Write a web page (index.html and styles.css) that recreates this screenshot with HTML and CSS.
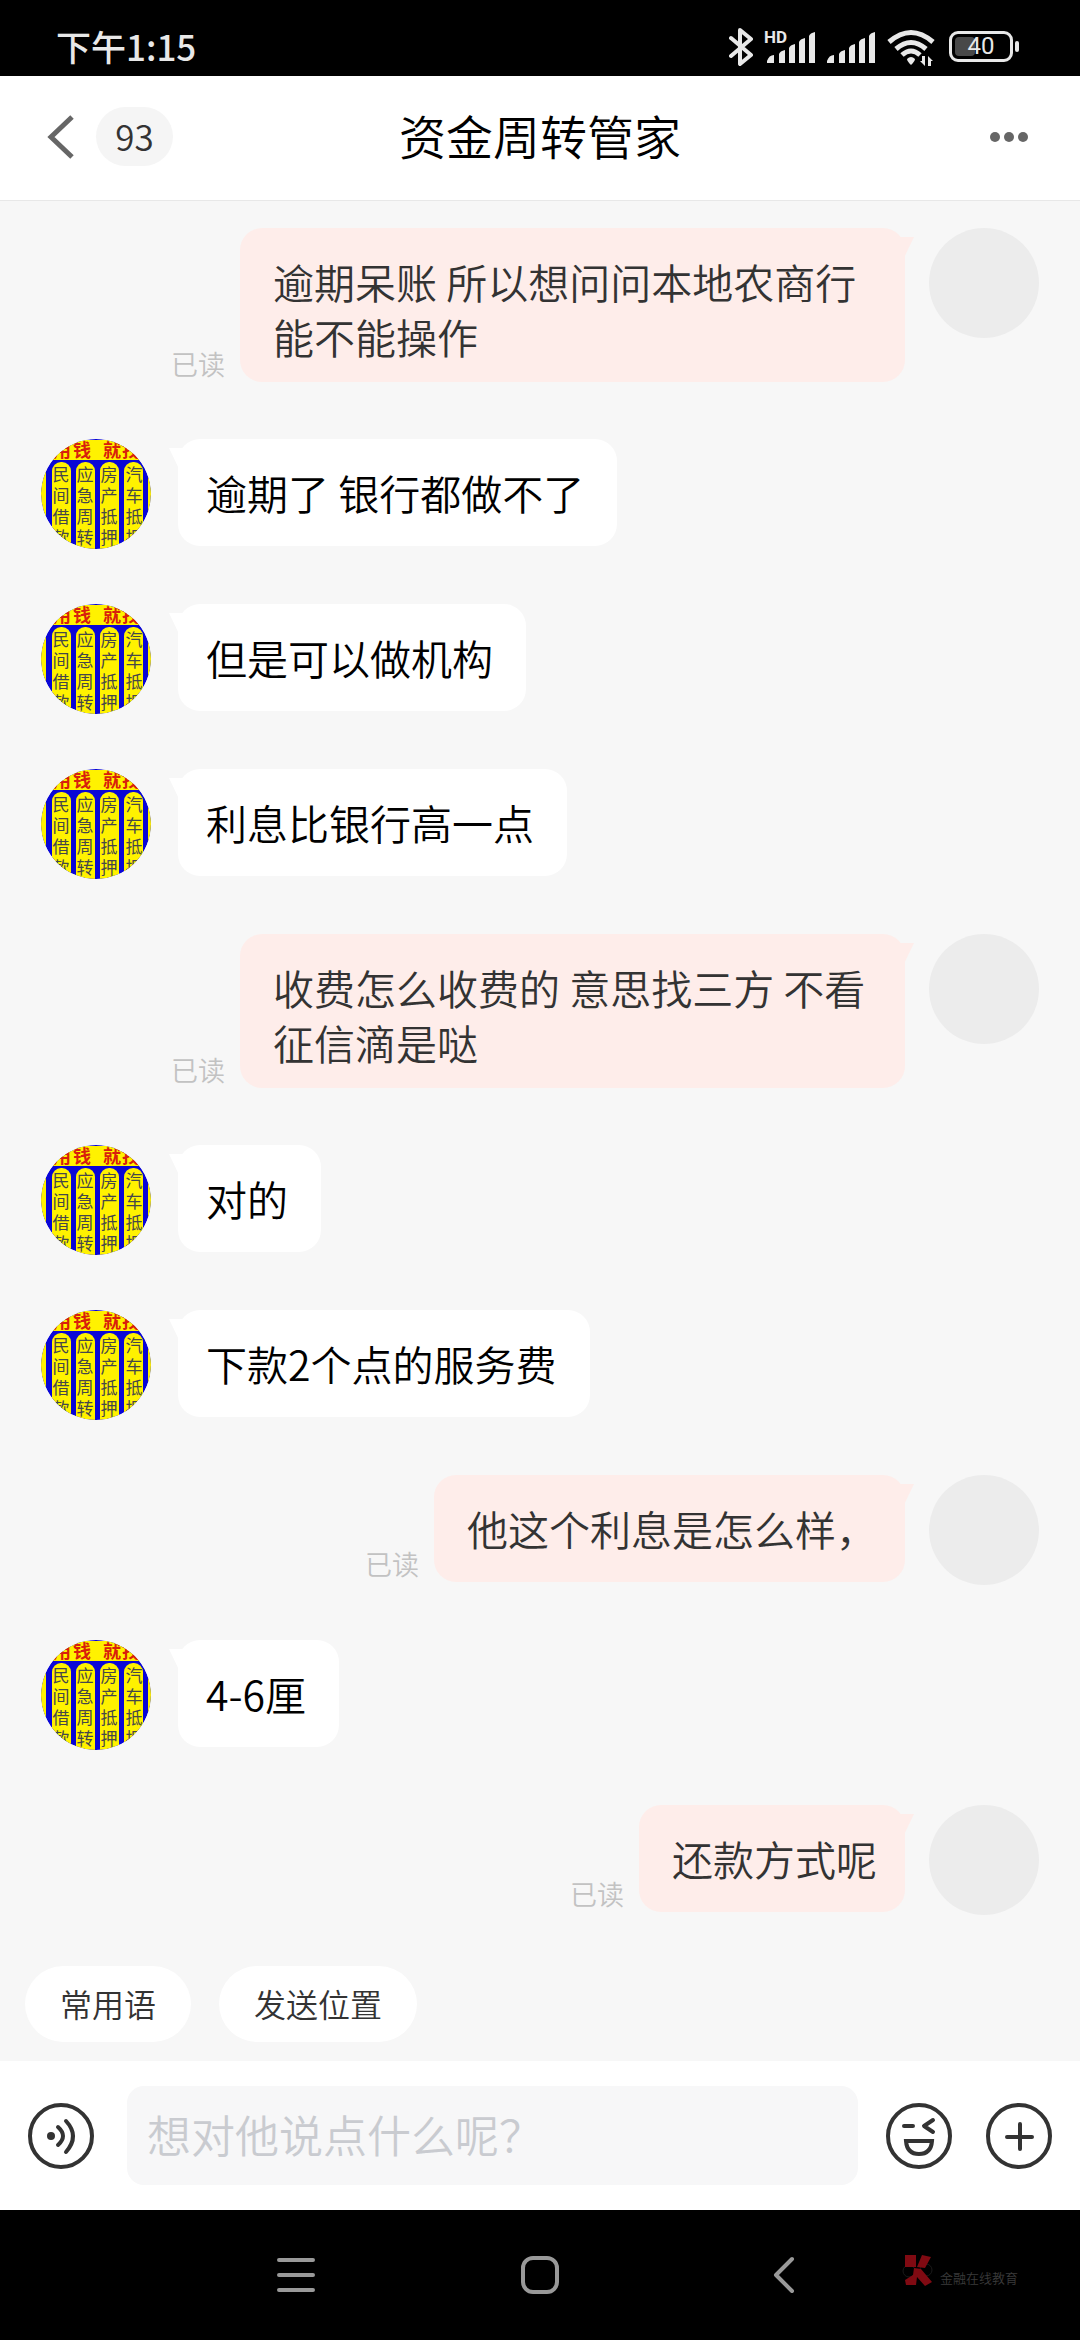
FILE: index.html
```html
<!DOCTYPE html>
<html lang="zh-CN">
<head>
<meta charset="utf-8">
<meta name="viewport" content="width=device-width">
<title>资金周转管家</title>
<link rel="stylesheet" href="styles.css">
</head>
<body>
<svg class="defs" width="0" height="0" aria-hidden="true">
  <symbol id="shop" viewBox="0 0 110 110">
    <clipPath id="round"><circle cx="55" cy="55" r="55"/></clipPath>
    <g clip-path="url(#round)">
      <rect width="110" height="110" fill="#0a06d6"/>
      <rect width="110" height="20" y="1" fill="#fff200"/>
      <rect x="-14" y="23" width="19" height="110" rx="9" fill="#fff200"/>
      <rect x="11" y="23" width="19" height="110" rx="9" fill="#fff200"/>
      <rect x="35" y="23" width="19" height="110" rx="9" fill="#fff200"/>
      <rect x="59" y="23" width="19" height="110" rx="9" fill="#fff200"/>
      <rect x="83" y="23" width="19" height="110" rx="9" fill="#fff200"/>
      <rect x="107" y="23" width="19" height="110" rx="9" fill="#fff200"/>
      <g class="shop-head"><text x="21" y="18">用</text><text x="41" y="18">钱</text><text x="71" y="18">就</text><text x="90" y="18">找</text></g>
      <g class="shop-cell">
        <text x="20" y="42">民</text><text x="20" y="63">间</text><text x="20" y="84">借</text><text x="20" y="105">款</text>
        <text x="44" y="42">应</text><text x="44" y="63">急</text><text x="44" y="84">周</text><text x="44" y="105">转</text>
        <text x="68" y="42">房</text><text x="68" y="63">产</text><text x="68" y="84">抵</text><text x="68" y="105">押</text>
        <text x="93" y="42">汽</text><text x="93" y="63">车</text><text x="93" y="84">抵</text><text x="93" y="105">押</text>
      </g>
    </g>
  </symbol>
</svg>

<div class="status">
  <span class="clock">下午1:15</span>
  <svg width="220" height="44" viewBox="0 0 220 44" role="img" aria-label="蓝牙 HD 信号 无线网络">
    <path d="M2 14 22 31 11 40V6L22 15 2 32" fill="none" stroke="#e8e8e8" stroke-width="4" stroke-linejoin="round" stroke-linecap="round"/>
    <text class="hd" x="35" y="19">HD</text>
    <g fill="#e8e8e8">
      <path id="bars" d="M38 39v-2q2-6 7-6v8zM50 39v-9q1-3 6-4v13zM60 39v-15q1-3 6-4v19zM70 39v-21q1-3 6-4v25zM80 39v-27q1-3 6-4v31z"/>
      <use href="#bars" x="60"/>
      <path d="M178 35q4-4 8 0 0 2-4 6-4-4-4-6z"/>
      <path d="M196 32v10l-5-5h2v-5zM199 42v-10l5 5h-2v5z"/>
    </g>
    <g fill="none" stroke="#e8e8e8" stroke-width="5">
      <path d="M160 18q22-19 44 0"/><path d="M167 25q15-13 30 0"/><path d="M173 31q9-8 18 0"/>
    </g>
  </svg>
  <span class="battery"><span class="charge"></span><span class="percent">40</span></span>
</div>

<header class="header">
  <div class="side">
    <button class="plain" aria-label="返回"><svg width="28" height="46" viewBox="0 0 28 46"><path d="M25 3 4 23l21 20" fill="none" stroke="#666" stroke-width="5"/></svg></button>
    <span class="count">93</span>
  </div>
  <h1 class="title">资金周转管家</h1>
  <div class="side end">
    <button class="plain" aria-label="更多"><svg width="45" height="12" viewBox="0 0 45 12" fill="#666"><circle cx="7" cy="6" r="5"/><circle cx="21" cy="6" r="5"/><circle cx="35" cy="6" r="5"/></svg></button>
  </div>
</header>

<main class="chat">
  <div class="row mine"><div class="avatar"></div><div class="line"><p class="bubble">逾期呆账 所以想问问本地农商行能不能操作</p><span class="read">已读</span></div></div>
  <div class="row"><svg class="avatar"><use href="#shop"/></svg><div class="line"><p class="bubble">逾期了 银行都做不了</p></div></div>
  <div class="row"><svg class="avatar"><use href="#shop"/></svg><div class="line"><p class="bubble">但是可以做机构</p></div></div>
  <div class="row"><svg class="avatar"><use href="#shop"/></svg><div class="line"><p class="bubble">利息比银行高一点</p></div></div>
  <div class="row mine"><div class="avatar"></div><div class="line"><p class="bubble">收费怎么收费的 意思找三方 不看征信滴是哒</p><span class="read">已读</span></div></div>
  <div class="row"><svg class="avatar"><use href="#shop"/></svg><div class="line"><p class="bubble">对的</p></div></div>
  <div class="row"><svg class="avatar"><use href="#shop"/></svg><div class="line"><p class="bubble">下款2个点的服务费</p></div></div>
  <div class="row mine"><div class="avatar"></div><div class="line"><p class="bubble">他这个利息是怎么样，</p><span class="read">已读</span></div></div>
  <div class="row"><svg class="avatar"><use href="#shop"/></svg><div class="line"><p class="bubble">4-6厘</p></div></div>
  <div class="row mine"><div class="avatar"></div><div class="line"><p class="bubble">还款方式呢</p><span class="read">已读</span></div></div>
</main>

<div class="quick">
  <button class="chip">常用语</button>
  <button class="chip">发送位置</button>
</div>

<form class="composer">
  <button class="plain voice" type="button" aria-label="语音"><svg class="tool" viewBox="0 0 66 66"><circle cx="33" cy="33" r="31"/><circle class="dot" cx="23" cy="33" r="4"/><path d="M30 24q10 9 0 18M38 18q14 15 0 31"/></svg></button>
  <input class="entry" type="text" aria-label="消息" placeholder="想对他说点什么呢？">
  <div class="tools">
    <button class="plain" type="button" aria-label="表情"><svg class="tool" viewBox="0 0 66 66"><circle cx="33" cy="33" r="31"/><path d="M18 23h9M47 17l-9 6 9 6"/><path d="M20 38h26q-1 13-13 13T20 38z" stroke-linejoin="miter"/></svg></button>
    <button class="plain" type="button" aria-label="更多功能"><svg class="tool" viewBox="0 0 66 66"><circle cx="33" cy="33" r="31"/><path d="M21 34h25M34 21v25"/></svg></button>
  </div>
</form>

<nav class="nav">
  <button class="plain" aria-label="最近任务"><svg class="key" viewBox="0 0 40 40"><path d="M3 5h34M3 20h34M3 35h34"/></svg></button>
  <button class="plain" aria-label="主屏幕"><svg class="key" viewBox="0 0 40 40"><rect x="3" y="3" width="34" height="34" rx="10"/></svg></button>
  <button class="plain" aria-label="返回上一页"><svg class="key" viewBox="0 0 40 40"><path d="M28 4 12 20l16 16"/></svg></button>
  <div class="mark">
    <svg width="32" height="36" viewBox="0 0 32 36"><g fill="none" stroke="#1a1a1a"><circle cx="7" cy="20" r="6"/><circle cx="24" cy="19" r="6"/></g><path fill="#800a12" d="M3 4h11v12H3zM20 4l9 2-6 11-8-1zM12 17l7 1 11 13-7 4-8-9-1 8H4l-1-5 8-5z"/></svg>
    <span>金融在线教育</span>
  </div>
</nav>
</body>
</html>
```

FILE: styles.css
```css
* { box-sizing: border-box; }

body {
  margin: 0;
  min-height: 100vh;
  display: flex;
  flex-direction: column;
  background: #f7f7f7;
  color: #000;
  font-family: "Noto Sans CJK SC DemiLight", "Noto Sans CJK SC", sans-serif;
  font-weight: 350;
}

.defs { position: absolute; }

.plain {
  display: flex;
  padding: 0;
  border: 0;
  background: none;
}

/* System status bar */
.status {
  height: 76px;
  padding: 16px 67px 0 56px;
  display: flex;
  align-items: center;
  background: #000;
  color: #e8e8e8;
}

.clock {
  flex: 1;
  font-family: "Noto Sans CJK SC", sans-serif;
  font-size: 35px;
  line-height: 44px;
  font-weight: 500;
}

.hd { font: 700 17px Roboto, sans-serif; fill: #e8e8e8; }

.battery {
  position: relative;
  width: 64px;
  height: 31px;
  border: 3px solid #e8e8e8;
  border-radius: 9px;
  display: flex;
  justify-content: center;
  align-items: center;
}

.charge {
  position: absolute;
  left: 3px;
  top: 3px;
  width: 20px;
  height: 19px;
  border-radius: 4px;
  background: #484848;
}

.battery::after {
  content: "";
  position: absolute;
  right: -9px;
  top: 7px;
  width: 4px;
  height: 11px;
  border-radius: 2px;
  background: #e8e8e8;
}

.percent { position: relative; font: 400 24px/24px Roboto, sans-serif; }

/* Title bar */
.header {
  height: 125px;
  padding: 0 47px 3px;
  display: flex;
  align-items: center;
  background: #fff;
  border-bottom: 1px solid #e8e8e8;
}

.side { flex: 1; display: flex; align-items: center; gap: 21px; }
.end { justify-content: flex-end; }

.count {
  width: 77px;
  height: 59px;
  border-radius: 30px;
  background: #f5f5f5;
  color: #333;
  font-size: 35px;
  line-height: 57px;
  text-align: center;
}

.title { margin: 0; padding-bottom: 4px; font-size: 47px; font-weight: inherit; line-height: 60px; }

/* Conversation */
.chat {
  flex: 1;
  padding: 27px 41px 51px;
  display: flex;
  flex-direction: column;
  gap: 55px;
}

.row { display: flex; align-items: flex-start; gap: 27px; }
.mine { flex-direction: row-reverse; gap: 24px; }

.avatar {
  flex: none;
  width: 110px;
  height: 110px;
  border-radius: 55px;
}

.mine .avatar { background: #ececec; }
.shop-head { font: 700 18px "Noto Sans CJK SC", sans-serif; fill: #d8200c; text-anchor: middle; }
.shop-cell { font: 400 17px "Noto Sans CJK SC", sans-serif; fill: #45474a; text-anchor: middle; }

.line {
  margin-bottom: 2px;
  display: flex;
  align-items: flex-end;
  gap: 15px;
}

.mine .line { flex-direction: row-reverse; }

.bubble {
  position: relative;
  max-width: 665px;
  min-height: 107px;
  margin: 0;
  padding: 26px 33px 18px 28px;
  border-radius: 22px;
  background: #fff;
  font-size: 41px;
  line-height: 55px;
}

.mine .bubble {
  padding: 26px 28px 18px 33px;
  background: #feedea;
  color: #333;
}

.bubble::before {
  content: "";
  position: absolute;
  left: -9px;
  top: 9px;
  width: 24px;
  height: 20px;
  background: inherit;
  clip-path: polygon(0 0, 100% 0, 100% 100%, 40% 100%);
}

.mine .bubble::before {
  left: auto;
  right: -9px;
  clip-path: polygon(0 0, 100% 0, 60% 100%, 0 100%);
}

.read { flex: none; color: #c2c2c2; font-size: 27px; line-height: 36px; }

/* Shortcuts above the composer */
.quick { padding: 0 25px 19px; display: flex; gap: 28px; }

.chip {
  height: 76px;
  padding: 0 35px 3px;
  border: 0;
  border-radius: 38px;
  background: #fff;
  color: #333;
  font-family: inherit;
  font-weight: inherit;
  font-size: 32px;
}

/* Composer */
.composer {
  height: 149px;
  padding: 0 28px;
  display: flex;
  align-items: center;
  gap: 28px;
  background: #fff;
}

.voice { margin-right: 5px; }

.entry {
  flex: 1;
  min-width: 0;
  height: 99px;
  padding: 0 20px 4px;
  border: 0;
  border-radius: 17px;
  background: #f7f7f8;
  font-family: inherit;
  font-weight: inherit;
  font-size: 44px;
}

.entry::placeholder { color: #c9cbd0; opacity: 1; }
.tools { display: flex; gap: 34px; }

.tool {
  width: 66px;
  height: 66px;
  fill: none;
  stroke: #333;
  stroke-width: 4;
  stroke-linecap: round;
  stroke-linejoin: round;
}

.tool .dot { fill: #333; stroke: none; }

/* System navigation */
.nav {
  position: relative;
  height: 130px;
  padding: 0 276px;
  display: flex;
  align-items: center;
  justify-content: space-between;
  background: #000;
}

.key {
  width: 40px;
  height: 40px;
  fill: none;
  stroke: #999;
  stroke-width: 4;
  stroke-linecap: round;
  stroke-linejoin: round;
}

.mark {
  position: absolute;
  right: 62px;
  top: 41px;
  display: flex;
  align-items: flex-end;
  gap: 6px;
  color: #3a3a3a;
  font-size: 13px;
  line-height: 18px;
}
```
